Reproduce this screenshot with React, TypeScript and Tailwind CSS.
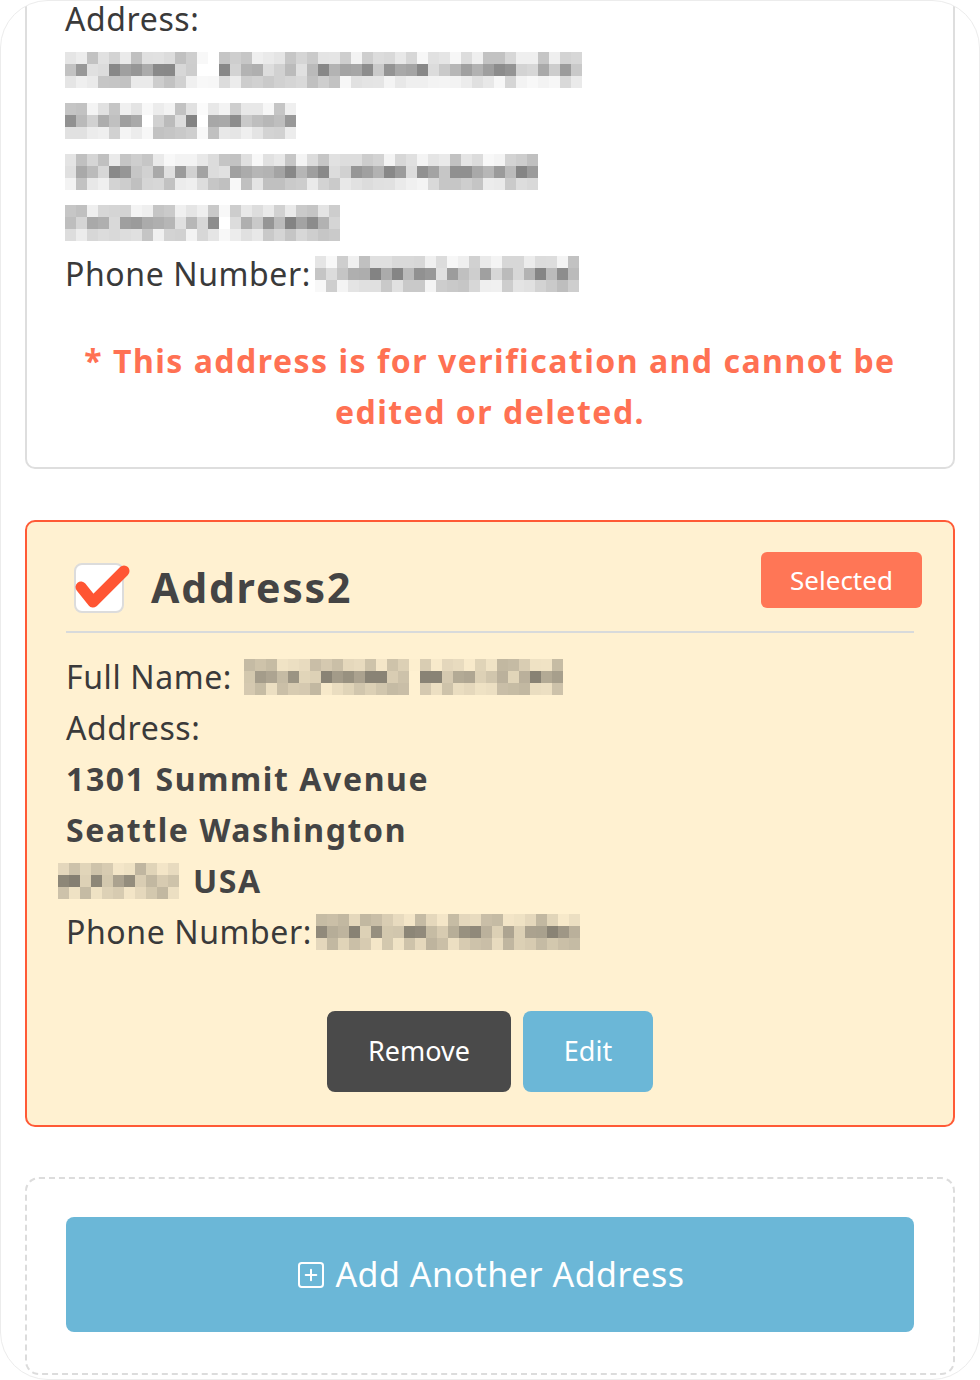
import { SquarePlus } from 'lucide-react';

// tiny seeded random so the "blurred" blocks look the same every render
function makeRand(seed: number) {
  let s = seed;
  return () => {
    s = (s * 9301 + 49297) % 233280;
    return s / 233280;
  };
}

type BlurProps = { cols: number; seed: number; gaps?: number[]; className?: string };

function Blur({ cols, seed, gaps = [], className = '' }: BlurProps) {
  const rand = makeRand(seed);
  const rows = [0, 1, 2].map((row) =>
    Array.from({ length: cols }, (_, c) => {
      const isGap = gaps.includes(c);
      let a = row === 1 ? 0.14 + rand() * 0.45 : 0.03 + rand() * 0.28;
      if (isGap) a = row === 1 ? 0 : rand() * 0.05;
      return a;
    })
  );
  return (
    <span className={`inline-flex flex-col align-middle ${className}`}>
      {rows.map((r, i) => (
        <span key={i} className="flex">
          {r.map((a, j) => (
            <span key={j} className="w-[11px] h-[12px]" style={{ backgroundColor: `rgba(45,45,45,${a.toFixed(2)})` }} />
          ))}
        </span>
      ))}
    </span>
  );
}

export default function App() {
  return (
    <div
      className="w-[980px] h-[1380px] overflow-hidden rounded-[48px] border border-[#ececec] bg-white px-[24px] text-[#3a3a3a]"
      style={{ fontFamily: '"Noto Sans", "Noto Sans CJK JP", sans-serif' }}
    >
      {/* verification address */}
      <div className="-mt-[60px] rounded-[10px] border-2 border-[#dedede] pt-[50px] pb-[30px] px-[38px]">
        <div className="text-[32px] leading-[51px] tracking-[0.6px]">
          <div>Address:</div>
          <div className="flex h-[51px] items-center">
            <Blur cols={47} seed={3} gaps={[12, 13]} />
          </div>
          <div className="flex h-[51px] items-center">
            <Blur cols={21} seed={17} gaps={[7, 12]} />
          </div>
          <div className="flex h-[51px] items-center">
            <Blur cols={43} seed={29} gaps={[]} />
          </div>
          <div className="flex h-[51px] items-center">
            <Blur cols={25} seed={41} gaps={[14]} />
          </div>
          <div className="flex items-center">
            Phone Number:
            <Blur cols={24} seed={53} className="ml-[4px]" />
          </div>
        </div>
        <p className="mt-[36px] text-center text-[32px] font-bold leading-[51px] tracking-[1.5px] text-[#ff7153]">
          * This address is for verification and cannot be
          <br />
          edited or deleted.
        </p>
      </div>

      {/* selected address */}
      <div className="mt-[51px] rounded-[10px] border-2 border-[#ff5a36] bg-[#fff1d1] px-[39px] pt-[30px] pb-[33px]">
        <div className="flex items-start justify-between">
          <div className="mt-[6px] flex h-[60px] items-center gap-[27px] pl-[8px]">
            <span className="relative flex h-[50px] w-[50px] rounded-[8px] border-2 border-[#dcdcdc] bg-white">
              <svg className="absolute -left-[2px] -top-[8px]" width="60" height="60" viewBox="0 0 60 60">
                <path d="M7 30 L19 45 L50 14" fill="none" stroke="#ff5533" strokeWidth="11" strokeLinecap="round" strokeLinejoin="round" />
              </svg>
            </span>
            <span className="text-[41px] font-bold tracking-[1.8px] text-[#444]">Address2</span>
          </div>
          <span className="-mr-[8px] flex h-[56px] w-[161px] items-center justify-center rounded-[6px] bg-[#ff7656] text-[26px] text-white">
            Selected
          </span>
        </div>
        <div className="mt-[13px] h-[2px] bg-[#d8dadb]" />

        <div className="mt-[18px] text-[32px] leading-[51px] tracking-[0.6px]">
          <div className="flex items-center">
            Full Name:
            <Blur cols={29} seed={67} gaps={[15]} className="ml-[12px]" />
          </div>
          <div>Address:</div>
          <div className="font-bold tracking-[1.6px] text-[#444]">1301 Summit Avenue</div>
          <div className="font-bold tracking-[1.6px] text-[#444]">Seattle Washington</div>
          <div className="flex items-center font-bold tracking-[1.6px] text-[#444]">
            <Blur cols={11} seed={79} className="-ml-[8px] mr-[14px]" />
            USA
          </div>
          <div className="flex items-center">
            Phone Number:
            <Blur cols={24} seed={91} className="ml-[4px]" />
          </div>
        </div>

        <div className="mt-[54px] flex justify-center gap-[12px]">
          <button className="h-[81px] w-[184px] rounded-[8px] bg-[#4a4a4a] text-[27px] text-white">Remove</button>
          <button className="h-[81px] w-[130px] rounded-[8px] bg-[#6bb7d7] text-[27px] text-white">Edit</button>
        </div>
      </div>

      {/* add new */}
      <div className="mt-[50px] rounded-[14px] border-2 border-dashed border-[#dcdcdc] px-[39px] pt-[38px] pb-[41px]">
        <button className="flex h-[115px] w-full items-center justify-center gap-[8px] rounded-[8px] bg-[#6bb7d7] text-[34px] tracking-[0.5px] text-white">
          <SquarePlus size={32} strokeWidth={1.5} />
          Add Another Address
        </button>
      </div>
    </div>
  );
}
